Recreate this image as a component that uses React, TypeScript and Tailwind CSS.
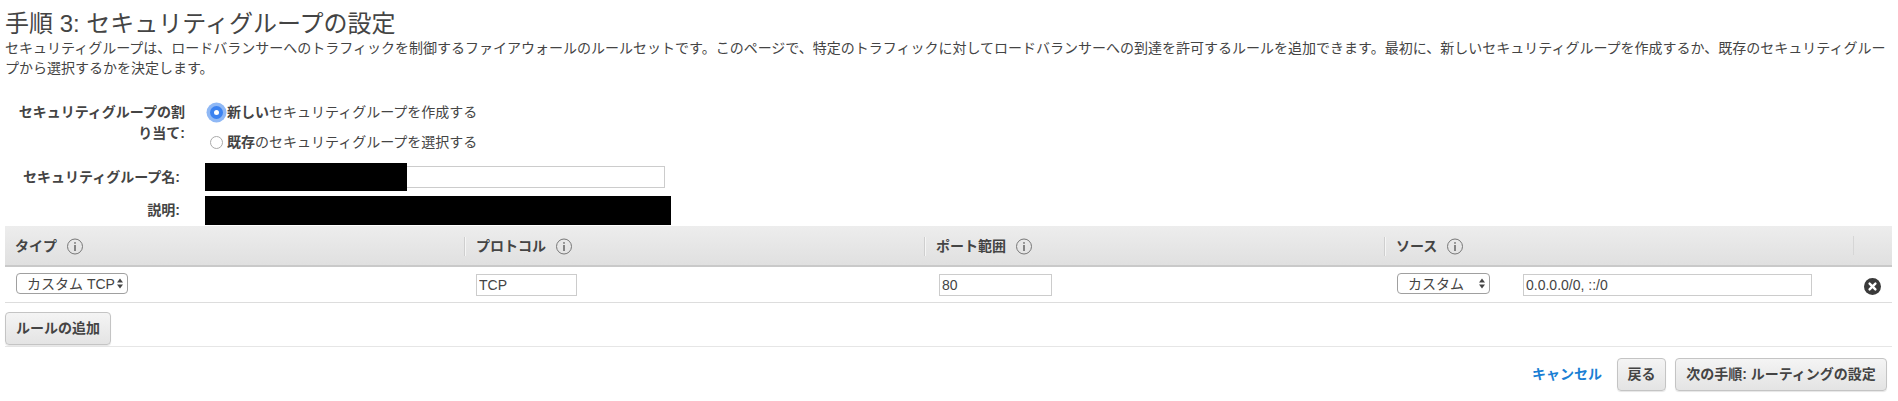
const FONT = "font-['Liberation_Sans','Noto_Sans_CJK_JP',sans-serif]";

// Small circled "i" next to the column titles
function InfoIcon() {
  return (
    <svg width="16" height="17" viewBox="0 0 16 17" className="ml-[10px] shrink-0">
      <circle cx="8" cy="8.5" r="7.5" fill="none" stroke="#777" strokeWidth="1" />
      <rect x="7.4" y="7" width="1.2" height="6" fill="#444" />
      <rect x="7.4" y="4.2" width="1.2" height="1.5" fill="#444" />
    </svg>
  );
}

function SelectBox({ label, className }: { label: string; className: string }) {
  return (
    <div
      className={`flex h-[21px] items-center justify-between rounded-[4px] border border-[#a0a0a0] bg-white pl-[10px] pr-[4px] text-[14px] leading-none text-[#444] ${className}`}
    >
      <span className="whitespace-nowrap">{label}</span>
      <svg width="6" height="13" viewBox="0 0 6 13" className="shrink-0">
        <path d="M3 1.5 L6 5.5 H0 Z" fill="#444" />
        <path d="M3 11.5 L6 7.5 H0 Z" fill="#444" />
      </svg>
    </div>
  );
}

function TextBox({ value, className }: { value: string; className: string }) {
  return (
    <input
      readOnly
      value={value}
      className={`mt-px h-[22px] border border-[#ccc] bg-white px-[2px] text-[14px] text-[#444] outline-none ${className}`}
    />
  );
}

function HeaderCell({ title, first }: { title: string; first?: boolean }) {
  return (
    <div className="flex h-full items-center pt-px">
      {!first && <div className="h-[19px] w-px bg-[#cfcfcf] shadow-[1px_0_0_#f5f5f5]" />}
      <span className={`text-[14px] font-bold text-[#444] ${first ? "pl-[10px]" : "pl-[11px]"}`}>{title}</span>
      <InfoIcon />
    </div>
  );
}

function GrayButton({ label, className }: { label: string; className: string }) {
  return (
    <button
      className={`h-[33px] rounded-[4px] border border-[#c4c4c4] bg-gradient-to-b from-[#f4f4f4] to-[#e4e4e4] text-[14px] font-bold whitespace-nowrap text-[#444] shadow-[0_1px_1px_rgba(0,0,0,0.1)] ${className}`}
    >
      {label}
    </button>
  );
}

export default function App() {
  return (
    <div className={`h-[401px] w-[1898px] overflow-hidden bg-white px-[5px] pt-[8px] text-[#444] ${FONT}`}>
      <h1 className="h-[30px] text-[24px] leading-[32px] font-normal text-[#444]">手順 3: セキュリティグループの設定</h1>
      <p className="w-[1888px] text-[14px] leading-[20px] text-[#444]">
        セキュリティグループは、ロードバランサーへのトラフィックを制御するファイアウォールのルールセットです。このページで、特定のトラフィックに対してロードバランサーへの到達を許可するルールを追加できます。最初に、新しいセキュリティグループを作成するか、既存のセキュリティグループから選択するかを決定します。
      </p>

      {/* assignment radios */}
      <div className="mt-[24px] flex">
        <div className="w-[180px] pl-[8px] text-right text-[14px] leading-[21px] font-bold">
          セキュリティグループの割り当て:
        </div>
        <div className="ml-[25px] flex flex-col gap-[10px]">
          <label className="flex h-[20px] items-center text-[14px]">
            <span className="flex h-[13px] w-[13px] items-center justify-center rounded-full bg-[#3b82f0] shadow-[0_0_0_3.5px_#8fb8f5]">
              <span className="h-[5px] w-[5px] rounded-full bg-white" />
            </span>
            <span className="ml-[4px]">
              <b>新しい</b>セキュリティグループを作成する
            </span>
          </label>
          <label className="flex h-[20px] items-center text-[14px]">
            <span className="h-[13px] w-[13px] rounded-full border border-[#aaa] bg-white" />
            <span className="ml-[4px]">
              <b>既存</b>のセキュリティグループを選択する
            </span>
          </label>
        </div>
      </div>

      <div className="mt-[11px] flex h-[28px] items-center">
        <div className="w-[175px] text-right text-[14px] font-bold">セキュリティグループ名:</div>
        <div className="relative ml-[25px] h-[28px] w-[460px]">
          <input readOnly className="mt-[3px] h-[22px] w-full border border-[#ccc] bg-white outline-none" />
          <div className="absolute top-0 left-0 h-[28px] w-[202px] bg-black" />
        </div>
      </div>

      <div className="mt-[5px] mb-px flex h-[29px] items-center">
        <div className="w-[175px] text-right text-[14px] font-bold">説明:</div>
        <div className="ml-[25px] h-[29px] w-[466px] bg-black" />
      </div>

      {/* rules table */}
      <div className="w-[1887px]">
        <div className="h-[41px] border-b-2 border-[#c9c9c9] bg-gradient-to-b from-[#ededed] to-[#e0e0e0]">
          <div className="grid h-full grid-cols-[459px_460px_460px_469px_1fr]">
            <HeaderCell title="タイプ" first />
            <HeaderCell title="プロトコル" />
            <HeaderCell title="ポート範囲" />
            <HeaderCell title="ソース" />
            <div className="flex h-full items-center">
              <div className="h-[19px] w-px bg-[#d6d6d6]" />
            </div>
          </div>
        </div>
        <div className="grid h-[36px] grid-cols-[459px_460px_460px_469px_1fr] items-start border-b border-[#ddd] pt-[6px]">
          <div className="pl-[11px]">
            <SelectBox label="カスタム TCP" className="w-[112px]" />
          </div>
          <div className="pl-[12px]">
            <TextBox value="TCP" className="w-[101px]" />
          </div>
          <div className="pl-[15px]">
            <TextBox value="80" className="w-[113px]" />
          </div>
          <div className="flex items-start pl-[13px]">
            <SelectBox label="カスタム" className="w-[93px]" />
            <TextBox value="0.0.0.0/0, ::/0" className="ml-[33px] w-[289px]" />
          </div>
          <div className="pl-[11px]">
            <svg width="17" height="17" viewBox="0 0 17 17" className="mt-[5px]">
              <circle cx="8.5" cy="8.5" r="8.5" fill="#3a3a3a" />
              <path d="M5.6 5.6 L11.4 11.4 M11.4 5.6 L5.6 11.4" stroke="#fff" strokeWidth="2.4" strokeLinecap="round" />
            </svg>
          </div>
        </div>

        <div className="h-[44px] border-b border-[#e6e6e6] pt-[9px]">
          <GrayButton label="ルールの追加" className="w-[106px]" />
        </div>
      </div>

      <div className="mt-[11px] flex w-[1882px] items-center justify-end">
        <a className="mr-[15px] text-[14px] font-bold text-[#1a7fd4]">キャンセル</a>
        <GrayButton label="戻る" className="w-[49px]" />
        <GrayButton label="次の手順: ルーティングの設定" className="ml-[9px] w-[212px]" />
      </div>
    </div>
  );
}
